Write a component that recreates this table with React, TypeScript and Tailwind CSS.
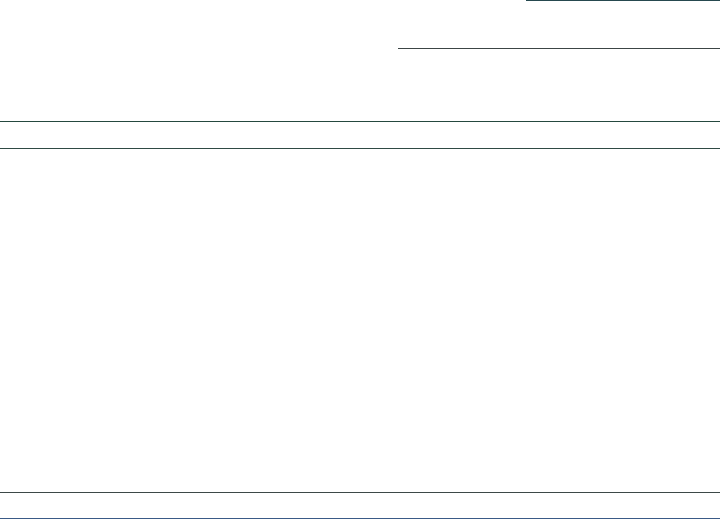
export default function App() {
  return (
    <div className="h-[519px] w-[720px] overflow-hidden bg-white">
      <div className="flex h-[48px] justify-end">
        <div className="w-[194px] border-t border-[#26494f]" />
      </div>
      <div className="flex h-[73px] justify-end">
        <div className="w-[322px] border-t border-[#3c4545]" />
      </div>
      <div className="h-[27px] border-t border-[#25493f]" />
      <div className="h-[344px] border-t border-[#2f4a44]" />
      <div className="h-[26px] border-t border-[#3d4947]" />
      <div className="border-t border-[#3a5a86]" />
    </div>
  )
}
